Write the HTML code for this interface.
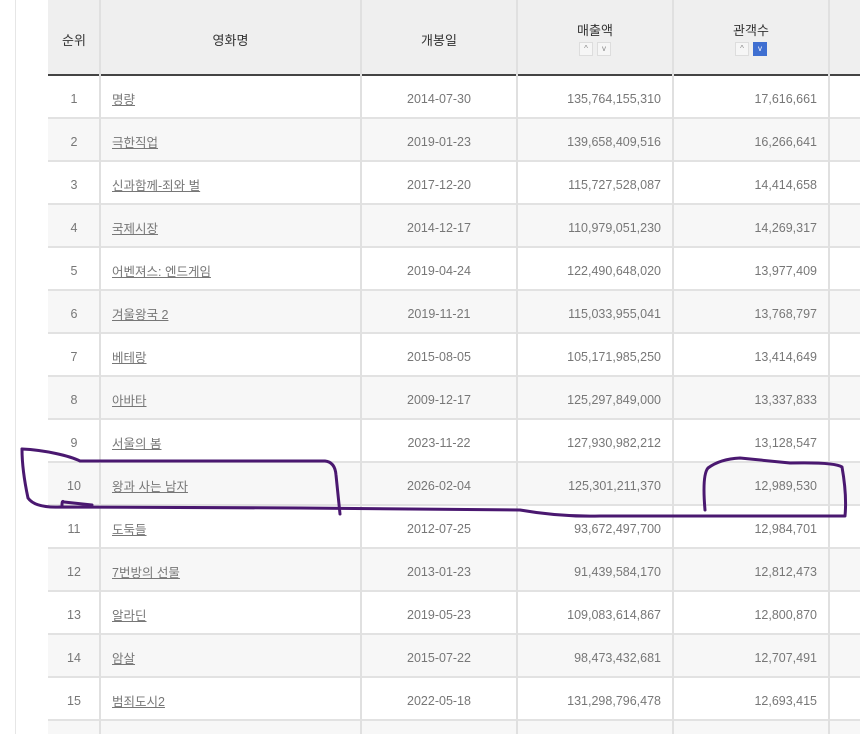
<!DOCTYPE html>
<html style="height:734px;overflow:hidden"><head><meta charset="utf-8"><style>
body{margin:0;width:860px;height:734px;overflow:hidden;background:#fff;font-family:"Liberation Sans","Noto Sans CJK KR",sans-serif;position:relative}
.lb{position:absolute;left:15px;top:0;width:1px;height:734px;background:#e6e6e6}
.hd{position:absolute;left:48px;top:0;width:812px;height:74px;background:#efefef;border-bottom:2px solid #444}
.row{position:absolute;left:48px;width:812px;height:41px;border-bottom:2px solid #e2e2e2;font-size:12.5px;color:#777}
.row.g{background:#f7f7f7}
.c{position:absolute;top:2px;height:100%;display:flex;align-items:center;box-sizing:border-box}
.v{position:absolute;top:0;width:2px;height:734px;background:#e0e0e0}
.ht{position:absolute;font-size:13px;color:#333;text-align:center}
.bt{display:inline-block;width:12px;height:12px;border:1px solid #ddd;background:#f6f6f6;font-size:8px;line-height:12px;color:#888;margin:0 2px;vertical-align:top}
a{color:#777;text-decoration:underline}
</style></head><body>
<div class="lb"></div>
<div class="hd"></div>
<div class="ht" style="left:48px;width:52px;top:30px">순위</div>
<div class="ht" style="left:100px;width:261px;top:30px">영화명</div>
<div class="ht" style="left:361px;width:156px;top:30px">개봉일</div>
<div class="ht" style="left:517px;width:156px;top:20px">매출액<br><span style="display:inline-block;margin-top:3px"><span class="bt">^</span><span class="bt">v</span></span></div>
<div class="ht" style="left:673px;width:156px;top:20px">관객수<br><span style="display:inline-block;margin-top:3px"><span class="bt">^</span><span class="bt" style="background:#3f6fd1;border-color:#3f6fd1;color:#fff">v</span></span></div>
<div id="rows"></div>
<script>
var d=[["명량","2014-07-30","135,764,155,310","17,616,661"],["극한직업","2019-01-23","139,658,409,516","16,266,641"],["신과함께-죄와 벌","2017-12-20","115,727,528,087","14,414,658"],["국제시장","2014-12-17","110,979,051,230","14,269,317"],["어벤져스: 엔드게임","2019-04-24","122,490,648,020","13,977,409"],["겨울왕국 2","2019-11-21","115,033,955,041","13,768,797"],["베테랑","2015-08-05","105,171,985,250","13,414,649"],["아바타","2009-12-17","125,297,849,000","13,337,833"],["서울의 봄","2023-11-22","127,930,982,212","13,128,547"],["왕과 사는 남자","2026-02-04","125,301,211,370","12,989,530"],["도둑들","2012-07-25","93,672,497,700","12,984,701"],["7번방의 선물","2013-01-23","91,439,584,170","12,812,473"],["알라딘","2019-05-23","109,083,614,867","12,800,870"],["암살","2015-07-22","98,473,432,681","12,707,491"],["범죄도시2","2022-05-18","131,298,796,478","12,693,415"]];
var h="";
d.forEach(function(r,i){var t=76+43*i;h+='<div class="row'+(i%2?' g':'')+'" style="top:'+t+'px"><div class="c" style="left:0;width:52px;justify-content:center">'+(i+1)+'</div><div class="c" style="left:64px"><a>'+r[0]+'</a></div><div class="c" style="left:313px;width:156px;justify-content:center">'+r[1]+'</div><div class="c" style="left:469px;width:156px;justify-content:flex-end;padding-right:12px">'+r[2]+'</div><div class="c" style="left:625px;width:156px;justify-content:flex-end;padding-right:12px">'+r[3]+'</div></div>';});
h+='<div class="row g" style="top:721px;height:13px;border:0"></div>';
document.getElementById("rows").innerHTML=h;
</script>
<div class="v" style="left:99px"></div><div class="v" style="left:360px"></div><div class="v" style="left:516px"></div><div class="v" style="left:672px"></div><div class="v" style="left:828px"></div>
<svg style="position:absolute;left:0;top:0" width="860" height="734"><g fill="none" stroke="#4a1870" stroke-width="3" stroke-linecap="round" stroke-linejoin="round">
<path d="M22 449 C45 450 70 456 80 461 L325 461 Q335 462 336 475 L340 514"/>
<path d="M22 449 Q22 470 28 498 Q35 508 60 507 L300 508 L520 510 Q560 517 600 516 L845 516 Q847 495 842 467 Q835 462 790 463 L740 458 Q720 459 708 468 Q702 475 705 510"/>
<path d="M62 505 Q62 500 64 502 L92 505"/>
</g></svg>
</body></html>
